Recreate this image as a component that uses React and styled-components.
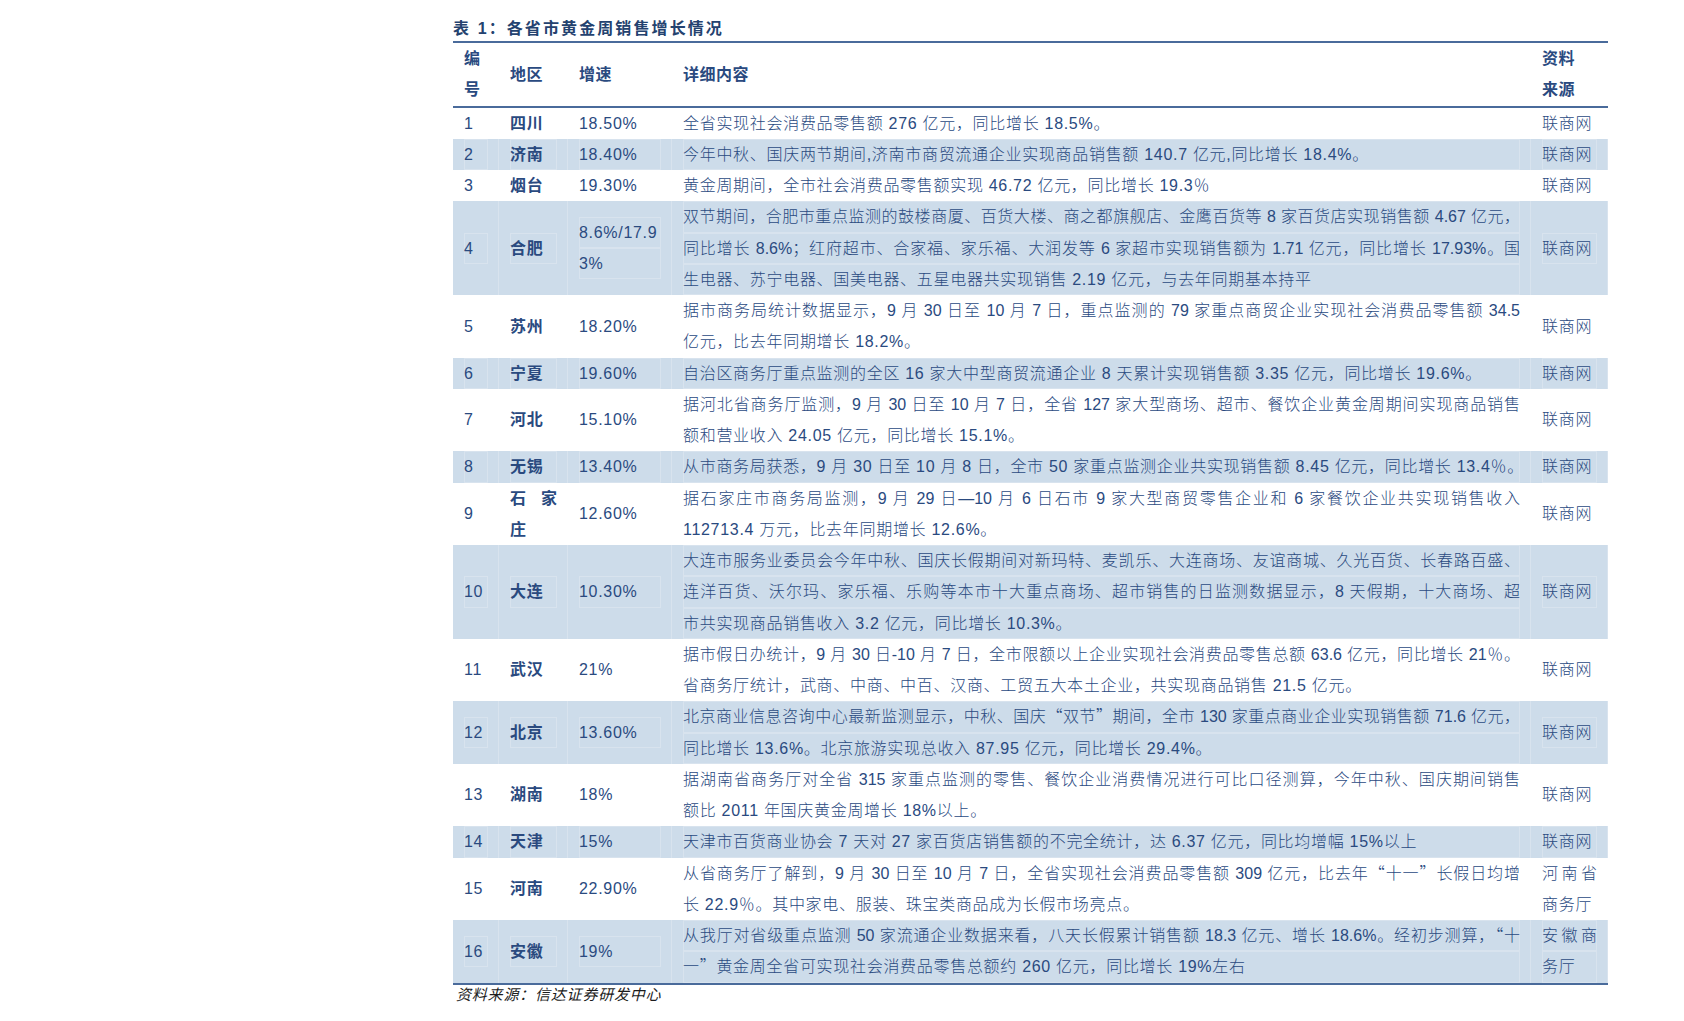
import React from 'react'
import styled, { createGlobalStyle } from 'styled-components'

const NAVY = '#2a4a7f'
const RULE = '#4a6b9b'
const SHADE = '#cddcea'
const FAINT = 'rgba(255, 255, 255, 0.22)'

const GlobalStyle = createGlobalStyle`
  html, body {
    margin: 0;
    background: #fff;
  }
  body {
    font-family: "Liberation Sans", "Noto Sans CJK SC", sans-serif;
    color: ${NAVY};
  }
`

const Page = styled.div`
  width: 1155px;
  padding: 17px 0 0 453px;
`

const Caption = styled.div`
  font-size: 16px;
  font-weight: bold;
  line-height: 24px;
  letter-spacing: 2.1px;
  color: #24426f;
`

const Table = styled.table`
  width: 1155px;
  table-layout: fixed;
  border-collapse: collapse;
  border-top: 2px solid ${RULE};
  border-bottom: 2px solid ${RULE};
  font-size: 16px;
`

const HeadCell = styled.th`
  padding: 0 11px;
  text-align: left;
  vertical-align: middle;
  font-weight: bold;
  line-height: 31.25px;
  letter-spacing: 0.5px;
  border-bottom: 2px solid ${RULE};
`

const Row = styled.tr`
  background: ${p => (p.$shaded ? SHADE : 'transparent')};
`

const Cell = styled.td`
  padding: 0 11px;
  vertical-align: middle;
  line-height: 31.25px;
  font-weight: ${p => (p.$bold ? 'bold' : 300)};
  box-shadow: ${p => (p.$shaded ? `inset -1px 0 0 ${FAINT}` : 'none')};
`

const Line = styled.div`
  height: 31.25px;
  text-align: left;
  white-space: nowrap;
  letter-spacing: ${p => (p.$spread ? '0' : '0.7px')};
  text-align-last: ${p => (p.$spread ? 'justify' : 'auto')};
  box-shadow: ${p => (p.$shaded ? `inset 0 0 0 1px ${FAINT}` : 'none')};
`

// curly quotes taken from the CJK face so they sit full-width
const Quote = styled.span`
  font-family: "Noto Sans CJK SC", sans-serif;
  line-height: 0;
`

const Note = styled.div`
  padding-left: 3px;
  font-size: 15px;
  font-style: italic;
  line-height: 20px;
  letter-spacing: 0.8px;
  color: #1c1c1c;
`

const rows = [
  {
    no: '1', region: ['四川'], rate: ['18.50%'], source: ['联商网'],
    detail: ['全省实现社会消费品零售额 276 亿元，同比增长 18.5%。'],
  },
  {
    no: '2', region: ['济南'], rate: ['18.40%'], source: ['联商网'],
    detail: ['今年中秋、国庆两节期间,济南市商贸流通企业实现商品销售额 140.7 亿元,同比增长 18.4%。'],
  },
  {
    no: '3', region: ['烟台'], rate: ['19.30%'], source: ['联商网'],
    detail: ['黄金周期间，全市社会消费品零售额实现 46.72 亿元，同比增长 19.3％'],
  },
  {
    no: '4', region: ['合肥'], rate: ['8.6%/17.9', '3%'], source: ['联商网'],
    detail: [
      '双节期间，合肥市重点监测的鼓楼商厦、百货大楼、商之都旗舰店、金鹰百货等 8 家百货店实现销售额 4.67 亿元，',
      '同比增长 8.6%；红府超市、合家福、家乐福、大润发等 6 家超市实现销售额为 1.71 亿元，同比增长 17.93%。国',
      '生电器、苏宁电器、国美电器、五星电器共实现销售 2.19 亿元，与去年同期基本持平',
    ],
  },
  {
    no: '5', region: ['苏州'], rate: ['18.20%'], source: ['联商网'],
    detail: [
      '据市商务局统计数据显示，9 月 30 日至 10 月 7 日，重点监测的 79 家重点商贸企业实现社会消费品零售额 34.5',
      '亿元，比去年同期增长 18.2%。',
    ],
  },
  {
    no: '6', region: ['宁夏'], rate: ['19.60%'], source: ['联商网'],
    detail: ['自治区商务厅重点监测的全区 16 家大中型商贸流通企业 8 天累计实现销售额 3.35 亿元，同比增长 19.6%。'],
  },
  {
    no: '7', region: ['河北'], rate: ['15.10%'], source: ['联商网'],
    detail: [
      '据河北省商务厅监测，9 月 30 日至 10 月 7 日，全省 127 家大型商场、超市、餐饮企业黄金周期间实现商品销售',
      '额和营业收入 24.05 亿元，同比增长 15.1%。',
    ],
  },
  {
    no: '8', region: ['无锡'], rate: ['13.40%'], source: ['联商网'],
    detail: ['从市商务局获悉，9 月 30 日至 10 月 8 日，全市 50 家重点监测企业共实现销售额 8.45 亿元，同比增长 13.4％。'],
  },
  {
    no: '9', region: ['石家', '庄'], rate: ['12.60%'], source: ['联商网'],
    detail: [
      '据石家庄市商务局监测，9 月 29 日—10 月 6 日石市 9 家大型商贸零售企业和 6 家餐饮企业共实现销售收入',
      '112713.4 万元，比去年同期增长 12.6%。',
    ],
  },
  {
    no: '10', region: ['大连'], rate: ['10.30%'], source: ['联商网'],
    detail: [
      '大连市服务业委员会今年中秋、国庆长假期间对新玛特、麦凯乐、大连商场、友谊商城、久光百货、长春路百盛、',
      '连洋百货、沃尔玛、家乐福、乐购等本市十大重点商场、超市销售的日监测数据显示，8 天假期，十大商场、超',
      '市共实现商品销售收入 3.2 亿元，同比增长 10.3%。',
    ],
  },
  {
    no: '11', region: ['武汉'], rate: ['21%'], source: ['联商网'],
    detail: [
      '据市假日办统计，9 月 30 日-10 月 7 日，全市限额以上企业实现社会消费品零售总额 63.6 亿元，同比增长 21％。',
      '省商务厅统计，武商、中商、中百、汉商、工贸五大本土企业，共实现商品销售 21.5 亿元。',
    ],
  },
  {
    no: '12', region: ['北京'], rate: ['13.60%'], source: ['联商网'],
    detail: [
      '北京商业信息咨询中心最新监测显示，中秋、国庆“双节”期间，全市 130 家重点商业企业实现销售额 71.6 亿元，',
      '同比增长 13.6%。北京旅游实现总收入 87.95 亿元，同比增长 29.4%。',
    ],
  },
  {
    no: '13', region: ['湖南'], rate: ['18%'], source: ['联商网'],
    detail: [
      '据湖南省商务厅对全省 315 家重点监测的零售、餐饮企业消费情况进行可比口径测算，今年中秋、国庆期间销售',
      '额比 2011 年国庆黄金周增长 18%以上。',
    ],
  },
  {
    no: '14', region: ['天津'], rate: ['15%'], source: ['联商网'],
    detail: ['天津市百货商业协会 7 天对 27 家百货店销售额的不完全统计，达 6.37 亿元，同比均增幅 15%以上'],
  },
  {
    no: '15', region: ['河南'], rate: ['22.90%'], source: ['河南省', '商务厅'],
    detail: [
      '从省商务厅了解到，9 月 30 日至 10 月 7 日，全省实现社会消费品零售额 309 亿元，比去年“十一”长假日均增',
      '长 22.9％。其中家电、服装、珠宝类商品成为长假市场亮点。',
    ],
  },
  {
    no: '16', region: ['安徽'], rate: ['19%'], source: ['安徽商', '务厅'],
    detail: [
      '从我厅对省级重点监测 50 家流通企业数据来看，八天长假累计销售额 18.3 亿元、增长 18.6%。经初步测算，“十',
      '一”黄金周全省可实现社会消费品零售总额约 260 亿元，同比增长 19%左右',
    ],
  },
]

const withQuotes = text =>
  text.split(/([“”])/).map((part, i) =>
    part === '“' || part === '”' ? <Quote key={i}>{part}</Quote> : part
  )

const Lines = ({ lines, shaded, spread }) =>
  lines.map((text, i) => (
    <Line key={i} $shaded={shaded} $spread={spread && i < lines.length - 1}>
      {withQuotes(text)}
    </Line>
  ))

export default function App() {
  return (
    <>
      <GlobalStyle />
      <Page>
        <Caption>表 1：各省市黄金周销售增长情况</Caption>
        <Table>
          <colgroup>
            <col style={{ width: 46 }} />
            <col style={{ width: 69 }} />
            <col style={{ width: 104 }} />
            <col style={{ width: 859 }} />
            <col style={{ width: 77 }} />
          </colgroup>
          <thead>
            <tr>
              <HeadCell><div>编</div><div>号</div></HeadCell>
              <HeadCell>地区</HeadCell>
              <HeadCell>增速</HeadCell>
              <HeadCell>详细内容</HeadCell>
              <HeadCell><div>资料</div><div>来源</div></HeadCell>
            </tr>
          </thead>
          <tbody>
            {rows.map((r, idx) => {
              const shaded = idx % 2 === 1
              return (
                <Row key={r.no} $shaded={shaded}>
                  <Cell $shaded={shaded}><Lines lines={[r.no]} shaded={shaded} /></Cell>
                  <Cell $shaded={shaded} $bold><Lines lines={r.region} shaded={shaded} spread /></Cell>
                  <Cell $shaded={shaded}><Lines lines={r.rate} shaded={shaded} /></Cell>
                  <Cell $shaded={shaded}><Lines lines={r.detail} shaded={shaded} spread /></Cell>
                  <Cell $shaded={shaded}><Lines lines={r.source} shaded={shaded} spread /></Cell>
                </Row>
              )
            })}
          </tbody>
        </Table>
        <Note>资料来源：信达证券研发中心</Note>
      </Page>
    </>
  )
}
